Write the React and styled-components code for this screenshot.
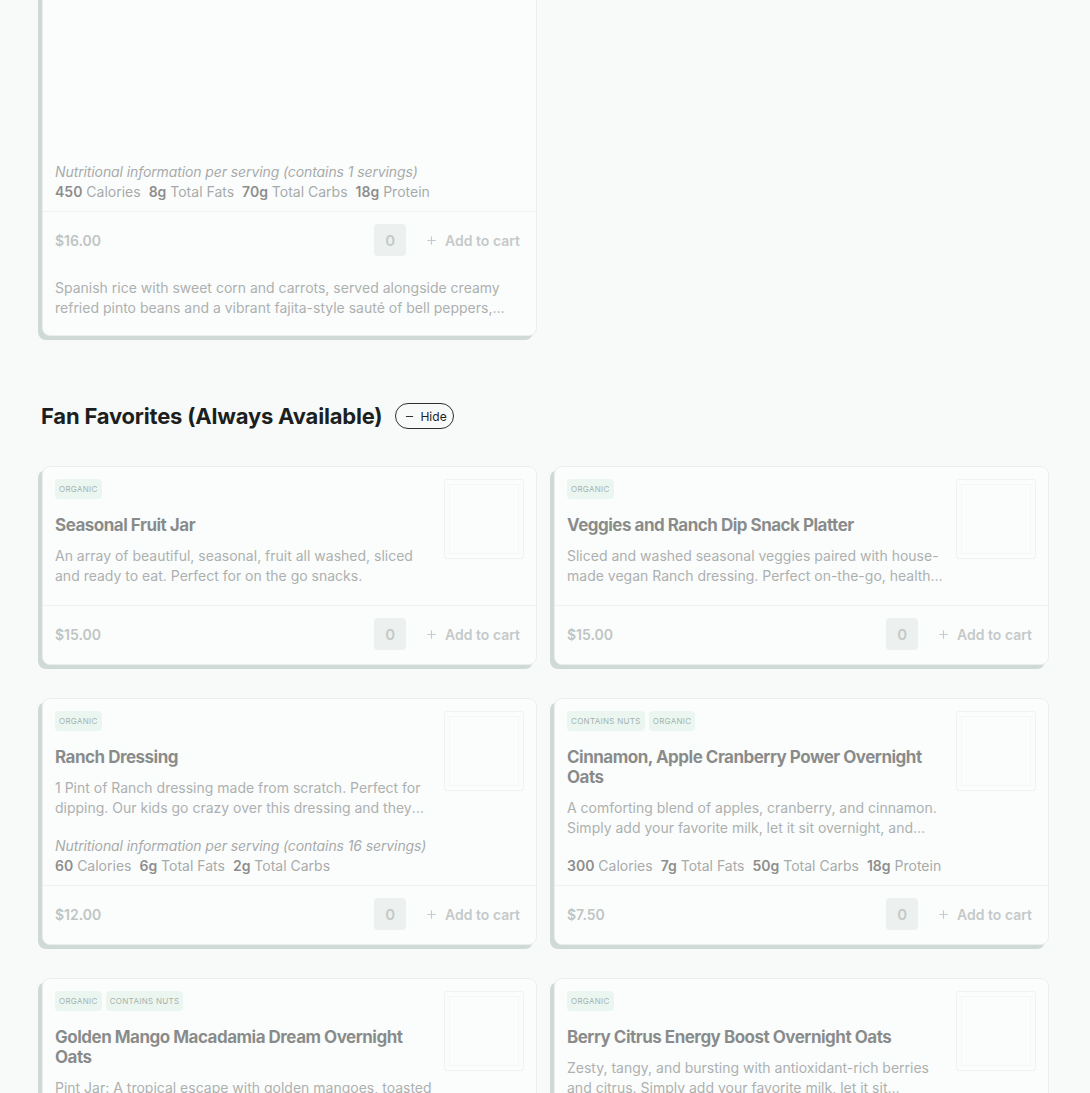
import React from 'react';
import styled, { createGlobalStyle } from 'styled-components';
import { Plus, Minus } from 'lucide-react';

const GlobalStyle = createGlobalStyle`
  html, body {
    margin: 0;
    padding: 0;
    background: #f7faf9;
    font-family: Inter, "Noto Sans", Arial, sans-serif;
    color: #1c1f1e;
  }
`

const Page = styled.div`
  padding: 0 41px 40px 42px;
  overflow: hidden;
`

const Grid = styled.div`
  display: grid;
  grid-template-columns: 1fr 1fr;
  column-gap: 17px;
  row-gap: 33px;
  margin-top: ${props => props.offset || '0'};
`

const Card = styled.div`
  display: flex;
  flex-direction: column;
  background: #ffffff;
  border: 1px solid #dfe5e3;
  border-radius: 8px;
  box-shadow: -4px 4px 0 0 #a9bab5;
  opacity: 0.5;
  overflow: hidden;
`

const Hero = styled.div`
  height: 169px;
`

const Body = styled.div`
  display: flex;
  gap: 12px;
  padding: 12px 12px 9px;
  flex: 1;
`

const Info = styled.div`
  flex: 1;
  min-width: 0;
  display: flex;
  flex-direction: column;
`

const Badges = styled.div`
  display: flex;
  gap: 4px;
  margin-bottom: 16px;
`

const Badge = styled.span`
  display: inline-flex;
  align-items: center;
  height: 20px;
  padding: 0 4px;
  border-radius: 4px;
  background: #e1f3ea;
  color: #4d6b60;
  font-size: 8px;
  letter-spacing: 0.3px;
  text-transform: uppercase;
`

const Title = styled.h3`
  margin: 0 0 11px;
  font-size: 17px;
  line-height: 20px;
  font-weight: 700;
  letter-spacing: -0.5px;
  color: #1c1f1e;
`

const Desc = styled.p`
  margin: 0 0 10px;
  font-size: 14px;
  line-height: 20px;
  color: #636868;
  display: -webkit-box;
  -webkit-line-clamp: 2;
  -webkit-box-orient: vertical;
  overflow: hidden;
`

const Nutrition = styled.div`
  margin-top: auto;
  padding-top: ${props => props.flat ? '0' : '8px'};
  font-size: 14px;
  line-height: 20px;
  color: #575c5c;
`

const NutritionNote = styled.div`
  font-style: italic;
  white-space: nowrap;
  letter-spacing: -0.1px;
`

const Facts = styled.div`
  display: flex;
  gap: 8px;
  white-space: nowrap;

  b {
    font-weight: 600;
    color: #1f2322;
  }
`

const Thumb = styled.div`
  flex: 0 0 80px;
  height: 80px;
  box-sizing: border-box;
  border: 1px solid #e6ebe9;
  border-radius: 3px;
  background: #ffffff;
  box-shadow: inset 0 0 0 4px #fff, inset 0 0 0 5px #f3f5f4;
`

const Footer = styled.div`
  display: flex;
  align-items: center;
  justify-content: space-between;
  padding: 12px 12px 14px;
  border-top: 1px solid #e6ebea;
`

const Price = styled.span`
  font-size: 14px;
  font-weight: 600;
  color: #899090;
`

const Actions = styled.div`
  display: flex;
  align-items: center;
  gap: 15px;
`

const Qty = styled.span`
  display: flex;
  align-items: center;
  justify-content: center;
  width: 32px;
  height: 32px;
  border-radius: 4px;
  background: #e2e9e8;
  color: #939a9a;
  font-size: 15px;
  font-weight: 600;
`

const AddButton = styled.button`
  display: flex;
  align-items: center;
  gap: 7px;
  padding: 0 4px;
  border: none;
  background: none;
  font-family: inherit;
  font-size: 14px;
  font-weight: 600;
  color: #939a9a;
  cursor: not-allowed;
`

const LowerDesc = styled.div`
  padding: 8px 12px 7px;
`

const SectionHead = styled.div`
  display: flex;
  align-items: center;
  gap: 13px;
  margin: 64px 0 34px -1px;
`

const Heading = styled.h2`
  margin: 0;
  font-size: 22px;
  line-height: 32px;
  font-weight: 700;
  letter-spacing: -0.2px;
  color: #1c1f1e;
`

const HideButton = styled.button`
  display: flex;
  align-items: center;
  gap: 5px;
  height: 26px;
  padding: 0 6px 0 8px;
  border: 1px solid #2b2f2e;
  border-radius: 13px;
  background: transparent;
  font-family: inherit;
  font-size: 12px;
  color: #1c1f1e;
`

const products = [
  {
    name: 'Seasonal Fruit Jar',
    badges: ['Organic'],
    desc: 'An array of beautiful, seasonal, fruit all washed, sliced and ready to eat. Perfect for on the go snacks.',
    price: '$15.00',
  },
  {
    name: 'Veggies and Ranch Dip Snack Platter',
    badges: ['Organic'],
    desc: 'Sliced and washed seasonal veggies paired with house-made vegan Ranch dressing. Perfect on-the-go, healthy snacks for the whole family.',
    price: '$15.00',
  },
  {
    name: 'Ranch Dressing',
    badges: ['Organic'],
    desc: '1 Pint of Ranch dressing made from scratch. Perfect for dipping. Our kids go crazy over this dressing and they ask for it every day.',
    price: '$12.00',
    servings: 16,
    facts: [['60', 'Calories'], ['6g', 'Total Fats'], ['2g', 'Total Carbs']],
  },
  {
    name: 'Cinnamon, Apple Cranberry Power Overnight Oats',
    badges: ['Contains Nuts', 'Organic'],
    desc: 'A comforting blend of apples, cranberry, and cinnamon. Simply add your favorite milk, let it sit overnight, and enjoy.',
    price: '$7.50',
    facts: [['300', 'Calories'], ['7g', 'Total Fats'], ['50g', 'Total Carbs'], ['18g', 'Protein']],
  },
  {
    name: 'Golden Mango Macadamia Dream Overnight Oats',
    badges: ['Organic', 'Contains Nuts'],
    desc: 'Pint Jar: A tropical escape with golden mangoes, toasted macadamia nuts and coconut.',
    price: '$7.50',
  },
  {
    name: 'Berry Citrus Energy Boost Overnight Oats',
    badges: ['Organic'],
    desc: 'Zesty, tangy, and bursting with antioxidant-rich berries and citrus. Simply add your favorite milk, let it sit overnight, and enjoy.',
    price: '$7.50',
  },
]

const FactsRow = ({ facts }) => (
  <Facts>
    {facts.map(([value, label]) => (
      <span key={label}><b>{value}</b> {label}</span>
    ))}
  </Facts>
)

const CardFooter = ({ price }) => (
  <Footer>
    <Price>{price}</Price>
    <Actions>
      <Qty>0</Qty>
      <AddButton disabled>
        <Plus size={13} strokeWidth={2} />
        Add to cart
      </AddButton>
    </Actions>
  </Footer>
)

const ProductCard = ({ product }) => (
  <Card>
    <Body>
      <Info>
        <Badges>
          {product.badges.map(b => <Badge key={b}>{b}</Badge>)}
        </Badges>
        <Title>{product.name}</Title>
        <Desc>{product.desc}</Desc>
        {product.facts && (
          <Nutrition>
            {product.servings && (
              <NutritionNote>
                Nutritional information per serving (contains {product.servings} servings)
              </NutritionNote>
            )}
            <FactsRow facts={product.facts} />
          </Nutrition>
        )}
      </Info>
      <Thumb />
    </Body>
    <CardFooter price={product.price} />
  </Card>
)

const App = () => {
  return (
    <Page>
      <GlobalStyle />
      <Grid offset="-20px">
        <Card>
          <Hero />
          <Body>
            <Info>
              <Nutrition flat>
                <NutritionNote>Nutritional information per serving (contains 1 servings)</NutritionNote>
                <FactsRow facts={[['450', 'Calories'], ['8g', 'Total Fats'], ['70g', 'Total Carbs'], ['18g', 'Protein']]} />
              </Nutrition>
            </Info>
          </Body>
          <CardFooter price="$16.00" />
          <LowerDesc>
            <Desc>
              Spanish rice with sweet corn and carrots, served alongside creamy refried pinto beans and a vibrant fajita-style sauté of bell peppers, onions and zucchini.
            </Desc>
          </LowerDesc>
        </Card>
      </Grid>

      <SectionHead>
        <Heading>Fan Favorites (Always Available)</Heading>
        <HideButton>
          <Minus size={11} strokeWidth={2} />
          Hide
        </HideButton>
      </SectionHead>

      <Grid>
        {products.map(p => <ProductCard key={p.name} product={p} />)}
      </Grid>
    </Page>
  )
}

export default App;
